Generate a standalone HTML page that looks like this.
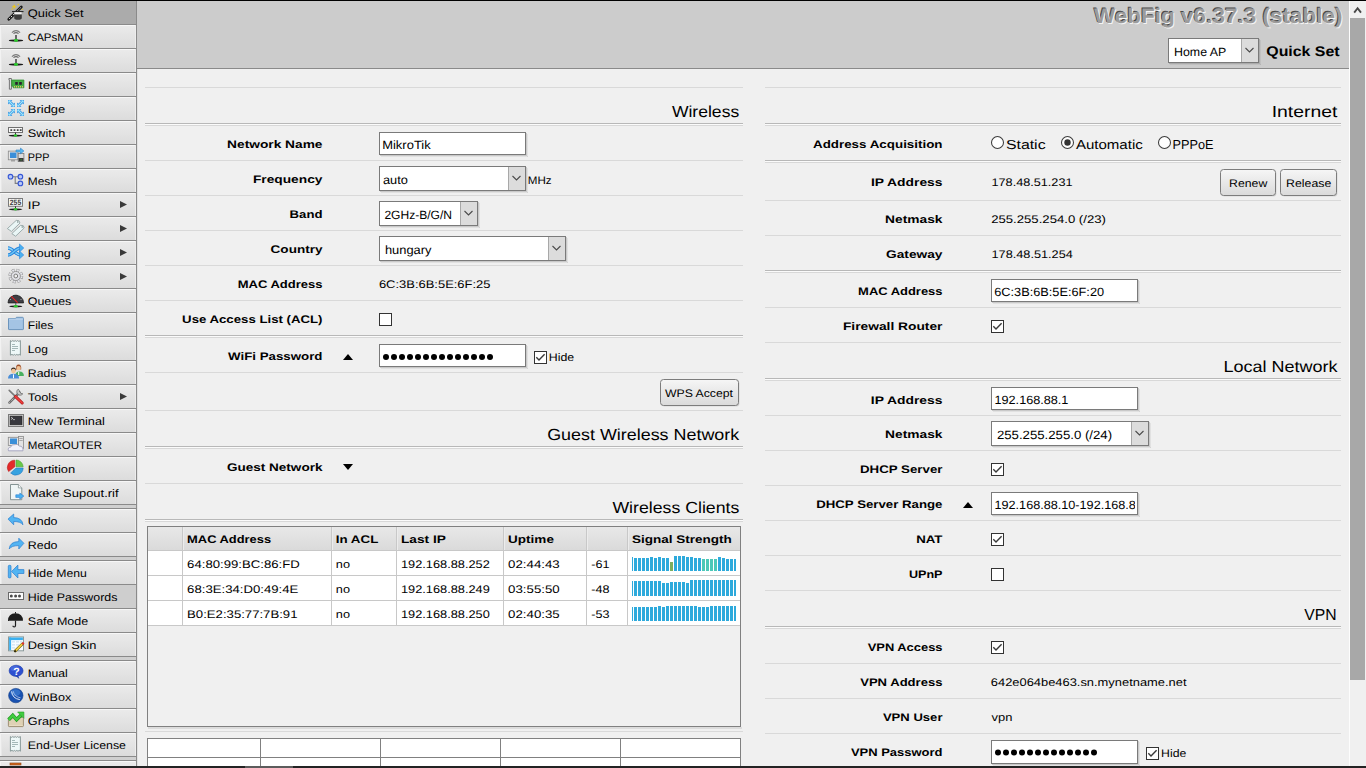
<!DOCTYPE html>
<html><head><meta charset="utf-8"><title>WebFig</title>
<style>html,body{margin:0;padding:0;width:1366px;height:768px;overflow:hidden;background:#f0f0f0;font-family:"Liberation Sans", sans-serif;}</style>
</head><body>
<svg width="1366" height="768" viewBox="0 0 1366 768" style="display:block" font-family="'Liberation Sans', sans-serif" text-rendering="geometricPrecision"><defs>
<linearGradient id="itemg" x1="0" y1="0" x2="0" y2="1"><stop offset="0" stop-color="#ebebeb"/><stop offset="1" stop-color="#dcdcdc"/></linearGradient>
<linearGradient id="btng" x1="0" y1="0" x2="0" y2="1"><stop offset="0" stop-color="#f6f6f6"/><stop offset="1" stop-color="#dadada"/></linearGradient>
<linearGradient id="hdrg" x1="0" y1="0" x2="0" y2="1"><stop offset="0" stop-color="#e8e8e8"/><stop offset="1" stop-color="#dadada"/></linearGradient>
</defs>
<rect x="0" y="0" width="1366" height="768" fill="#f0f0f0" />
<rect x="137" y="1" width="1212" height="67" fill="#cccccc" />
<rect x="137" y="68" width="1212" height="1" fill="#8a8a8a" />
<rect x="137" y="69" width="1" height="697" fill="#e2e2e2" />
<rect x="1349" y="1" width="17" height="765" fill="#f0f0f0" />
<rect x="1349" y="1" width="1" height="765" fill="#fdfdfd" />
<rect x="1350" y="18" width="15" height="662" fill="#a8a8a8" />
<path d="M1354.2 12.6 L1357.6 8.2 L1361 12.6" stroke="#484848" stroke-width="1.9" fill="none"/>
<rect x="0" y="1" width="136" height="765" fill="#d2d2d2" />
<rect x="136" y="1" width="1" height="765" fill="#8a8a8a" />
<rect x="0" y="1" width="136" height="23" fill="#ababab" />
<rect x="0" y="24" width="136" height="1" fill="#8a8a8a" />
<text x="27.8" y="17.0" font-size="11" font-weight="400" fill="#000" textLength="55.8" lengthAdjust="spacingAndGlyphs" >Quick Set</text>
<rect x="0" y="25" width="136" height="23" fill="url(#itemg)"/>
<rect x="0" y="25" width="135" height="1" fill="#f7f7f7" />
<rect x="135" y="25" width="1" height="23" fill="#ededed" />
<rect x="0" y="25" width="1" height="23" fill="#f2f2f2" />
<rect x="1" y="26" width="1" height="22" fill="#e8e8e8" />
<rect x="0" y="48" width="136" height="1" fill="#8a8a8a" />
<text x="27.8" y="41.0" font-size="11" font-weight="400" fill="#000" textLength="55.2" lengthAdjust="spacingAndGlyphs" >CAPsMAN</text>
<rect x="0" y="49" width="136" height="23" fill="url(#itemg)"/>
<rect x="0" y="49" width="135" height="1" fill="#f7f7f7" />
<rect x="135" y="49" width="1" height="23" fill="#ededed" />
<rect x="0" y="49" width="1" height="23" fill="#f2f2f2" />
<rect x="1" y="50" width="1" height="22" fill="#e8e8e8" />
<rect x="0" y="72" width="136" height="1" fill="#8a8a8a" />
<text x="27.8" y="65.0" font-size="11" font-weight="400" fill="#000" textLength="48.5" lengthAdjust="spacingAndGlyphs" >Wireless</text>
<rect x="0" y="73" width="136" height="23" fill="url(#itemg)"/>
<rect x="0" y="73" width="135" height="1" fill="#f7f7f7" />
<rect x="135" y="73" width="1" height="23" fill="#ededed" />
<rect x="0" y="73" width="1" height="23" fill="#f2f2f2" />
<rect x="1" y="74" width="1" height="22" fill="#e8e8e8" />
<rect x="0" y="96" width="136" height="1" fill="#8a8a8a" />
<text x="27.8" y="89.0" font-size="11" font-weight="400" fill="#000" textLength="58.7" lengthAdjust="spacingAndGlyphs" >Interfaces</text>
<rect x="0" y="97" width="136" height="23" fill="url(#itemg)"/>
<rect x="0" y="97" width="135" height="1" fill="#f7f7f7" />
<rect x="135" y="97" width="1" height="23" fill="#ededed" />
<rect x="0" y="97" width="1" height="23" fill="#f2f2f2" />
<rect x="1" y="98" width="1" height="22" fill="#e8e8e8" />
<rect x="0" y="120" width="136" height="1" fill="#8a8a8a" />
<text x="27.8" y="113.0" font-size="11" font-weight="400" fill="#000" textLength="37.5" lengthAdjust="spacingAndGlyphs" >Bridge</text>
<rect x="0" y="121" width="136" height="23" fill="url(#itemg)"/>
<rect x="0" y="121" width="135" height="1" fill="#f7f7f7" />
<rect x="135" y="121" width="1" height="23" fill="#ededed" />
<rect x="0" y="121" width="1" height="23" fill="#f2f2f2" />
<rect x="1" y="122" width="1" height="22" fill="#e8e8e8" />
<rect x="0" y="144" width="136" height="1" fill="#8a8a8a" />
<text x="27.8" y="137.0" font-size="11" font-weight="400" fill="#000" textLength="37.5" lengthAdjust="spacingAndGlyphs" >Switch</text>
<rect x="0" y="145" width="136" height="23" fill="url(#itemg)"/>
<rect x="0" y="145" width="135" height="1" fill="#f7f7f7" />
<rect x="135" y="145" width="1" height="23" fill="#ededed" />
<rect x="0" y="145" width="1" height="23" fill="#f2f2f2" />
<rect x="1" y="146" width="1" height="22" fill="#e8e8e8" />
<rect x="0" y="168" width="136" height="1" fill="#8a8a8a" />
<text x="27.8" y="161.0" font-size="11" font-weight="400" fill="#000" textLength="21.6" lengthAdjust="spacingAndGlyphs" >PPP</text>
<rect x="0" y="169" width="136" height="23" fill="url(#itemg)"/>
<rect x="0" y="169" width="135" height="1" fill="#f7f7f7" />
<rect x="135" y="169" width="1" height="23" fill="#ededed" />
<rect x="0" y="169" width="1" height="23" fill="#f2f2f2" />
<rect x="1" y="170" width="1" height="22" fill="#e8e8e8" />
<rect x="0" y="192" width="136" height="1" fill="#8a8a8a" />
<text x="27.8" y="185.0" font-size="11" font-weight="400" fill="#000" textLength="29.1" lengthAdjust="spacingAndGlyphs" >Mesh</text>
<rect x="0" y="193" width="136" height="23" fill="url(#itemg)"/>
<rect x="0" y="193" width="135" height="1" fill="#f7f7f7" />
<rect x="135" y="193" width="1" height="23" fill="#ededed" />
<rect x="0" y="193" width="1" height="23" fill="#f2f2f2" />
<rect x="1" y="194" width="1" height="22" fill="#e8e8e8" />
<rect x="0" y="216" width="136" height="1" fill="#8a8a8a" />
<text x="27.8" y="209.0" font-size="11" font-weight="400" fill="#000" textLength="12.5" lengthAdjust="spacingAndGlyphs" >IP</text>
<path d="M120 201 L127 204.5 L120 208 Z" fill="#3a3a3a"/>
<rect x="0" y="217" width="136" height="23" fill="url(#itemg)"/>
<rect x="0" y="217" width="135" height="1" fill="#f7f7f7" />
<rect x="135" y="217" width="1" height="23" fill="#ededed" />
<rect x="0" y="217" width="1" height="23" fill="#f2f2f2" />
<rect x="1" y="218" width="1" height="22" fill="#e8e8e8" />
<rect x="0" y="240" width="136" height="1" fill="#8a8a8a" />
<text x="27.8" y="233.0" font-size="11" font-weight="400" fill="#000" textLength="30.2" lengthAdjust="spacingAndGlyphs" >MPLS</text>
<path d="M120 225 L127 228.5 L120 232 Z" fill="#3a3a3a"/>
<rect x="0" y="241" width="136" height="23" fill="url(#itemg)"/>
<rect x="0" y="241" width="135" height="1" fill="#f7f7f7" />
<rect x="135" y="241" width="1" height="23" fill="#ededed" />
<rect x="0" y="241" width="1" height="23" fill="#f2f2f2" />
<rect x="1" y="242" width="1" height="22" fill="#e8e8e8" />
<rect x="0" y="264" width="136" height="1" fill="#8a8a8a" />
<text x="27.8" y="257.0" font-size="11" font-weight="400" fill="#000" textLength="43.0" lengthAdjust="spacingAndGlyphs" >Routing</text>
<path d="M120 249 L127 252.5 L120 256 Z" fill="#3a3a3a"/>
<rect x="0" y="265" width="136" height="23" fill="url(#itemg)"/>
<rect x="0" y="265" width="135" height="1" fill="#f7f7f7" />
<rect x="135" y="265" width="1" height="23" fill="#ededed" />
<rect x="0" y="265" width="1" height="23" fill="#f2f2f2" />
<rect x="1" y="266" width="1" height="22" fill="#e8e8e8" />
<rect x="0" y="288" width="136" height="1" fill="#8a8a8a" />
<text x="27.8" y="281.0" font-size="11" font-weight="400" fill="#000" textLength="43.0" lengthAdjust="spacingAndGlyphs" >System</text>
<path d="M120 273 L127 276.5 L120 280 Z" fill="#3a3a3a"/>
<rect x="0" y="289" width="136" height="23" fill="url(#itemg)"/>
<rect x="0" y="289" width="135" height="1" fill="#f7f7f7" />
<rect x="135" y="289" width="1" height="23" fill="#ededed" />
<rect x="0" y="289" width="1" height="23" fill="#f2f2f2" />
<rect x="1" y="290" width="1" height="22" fill="#e8e8e8" />
<rect x="0" y="312" width="136" height="1" fill="#8a8a8a" />
<text x="27.8" y="305.0" font-size="11" font-weight="400" fill="#000" textLength="43.5" lengthAdjust="spacingAndGlyphs" >Queues</text>
<rect x="0" y="313" width="136" height="23" fill="url(#itemg)"/>
<rect x="0" y="313" width="135" height="1" fill="#f7f7f7" />
<rect x="135" y="313" width="1" height="23" fill="#ededed" />
<rect x="0" y="313" width="1" height="23" fill="#f2f2f2" />
<rect x="1" y="314" width="1" height="22" fill="#e8e8e8" />
<rect x="0" y="336" width="136" height="1" fill="#8a8a8a" />
<text x="27.8" y="329.0" font-size="11" font-weight="400" fill="#000" textLength="25.5" lengthAdjust="spacingAndGlyphs" >Files</text>
<rect x="0" y="337" width="136" height="23" fill="url(#itemg)"/>
<rect x="0" y="337" width="135" height="1" fill="#f7f7f7" />
<rect x="135" y="337" width="1" height="23" fill="#ededed" />
<rect x="0" y="337" width="1" height="23" fill="#f2f2f2" />
<rect x="1" y="338" width="1" height="22" fill="#e8e8e8" />
<rect x="0" y="360" width="136" height="1" fill="#8a8a8a" />
<text x="27.8" y="353.0" font-size="11" font-weight="400" fill="#000" textLength="20.0" lengthAdjust="spacingAndGlyphs" >Log</text>
<rect x="0" y="361" width="136" height="23" fill="url(#itemg)"/>
<rect x="0" y="361" width="135" height="1" fill="#f7f7f7" />
<rect x="135" y="361" width="1" height="23" fill="#ededed" />
<rect x="0" y="361" width="1" height="23" fill="#f2f2f2" />
<rect x="1" y="362" width="1" height="22" fill="#e8e8e8" />
<rect x="0" y="384" width="136" height="1" fill="#8a8a8a" />
<text x="27.8" y="377.0" font-size="11" font-weight="400" fill="#000" textLength="38.5" lengthAdjust="spacingAndGlyphs" >Radius</text>
<rect x="0" y="385" width="136" height="23" fill="url(#itemg)"/>
<rect x="0" y="385" width="135" height="1" fill="#f7f7f7" />
<rect x="135" y="385" width="1" height="23" fill="#ededed" />
<rect x="0" y="385" width="1" height="23" fill="#f2f2f2" />
<rect x="1" y="386" width="1" height="22" fill="#e8e8e8" />
<rect x="0" y="408" width="136" height="1" fill="#8a8a8a" />
<text x="27.8" y="401.0" font-size="11" font-weight="400" fill="#000" textLength="29.7" lengthAdjust="spacingAndGlyphs" >Tools</text>
<path d="M120 393 L127 396.5 L120 400 Z" fill="#3a3a3a"/>
<rect x="0" y="409" width="136" height="23" fill="url(#itemg)"/>
<rect x="0" y="409" width="135" height="1" fill="#f7f7f7" />
<rect x="135" y="409" width="1" height="23" fill="#ededed" />
<rect x="0" y="409" width="1" height="23" fill="#f2f2f2" />
<rect x="1" y="410" width="1" height="22" fill="#e8e8e8" />
<rect x="0" y="432" width="136" height="1" fill="#8a8a8a" />
<text x="27.8" y="425.0" font-size="11" font-weight="400" fill="#000" textLength="77.1" lengthAdjust="spacingAndGlyphs" >New Terminal</text>
<rect x="0" y="433" width="136" height="23" fill="url(#itemg)"/>
<rect x="0" y="433" width="135" height="1" fill="#f7f7f7" />
<rect x="135" y="433" width="1" height="23" fill="#ededed" />
<rect x="0" y="433" width="1" height="23" fill="#f2f2f2" />
<rect x="1" y="434" width="1" height="22" fill="#e8e8e8" />
<rect x="0" y="456" width="136" height="1" fill="#8a8a8a" />
<text x="27.8" y="449.0" font-size="11" font-weight="400" fill="#000" textLength="74.3" lengthAdjust="spacingAndGlyphs" >MetaROUTER</text>
<rect x="0" y="457" width="136" height="23" fill="url(#itemg)"/>
<rect x="0" y="457" width="135" height="1" fill="#f7f7f7" />
<rect x="135" y="457" width="1" height="23" fill="#ededed" />
<rect x="0" y="457" width="1" height="23" fill="#f2f2f2" />
<rect x="1" y="458" width="1" height="22" fill="#e8e8e8" />
<rect x="0" y="480" width="136" height="1" fill="#8a8a8a" />
<text x="27.8" y="473.0" font-size="11" font-weight="400" fill="#000" textLength="47.4" lengthAdjust="spacingAndGlyphs" >Partition</text>
<rect x="0" y="481" width="136" height="23" fill="url(#itemg)"/>
<rect x="0" y="481" width="135" height="1" fill="#f7f7f7" />
<rect x="135" y="481" width="1" height="23" fill="#ededed" />
<rect x="0" y="481" width="1" height="23" fill="#f2f2f2" />
<rect x="1" y="482" width="1" height="22" fill="#e8e8e8" />
<rect x="0" y="504" width="136" height="1" fill="#8a8a8a" />
<text x="27.8" y="497.0" font-size="11" font-weight="400" fill="#000" textLength="90.8" lengthAdjust="spacingAndGlyphs" >Make Supout.rif</text>
<rect x="0" y="509" width="136" height="23" fill="url(#itemg)"/>
<rect x="0" y="509" width="135" height="1" fill="#f7f7f7" />
<rect x="135" y="509" width="1" height="23" fill="#ededed" />
<rect x="0" y="509" width="1" height="23" fill="#f2f2f2" />
<rect x="1" y="510" width="1" height="22" fill="#e8e8e8" />
<rect x="0" y="532" width="136" height="1" fill="#8a8a8a" />
<text x="27.8" y="525.0" font-size="11" font-weight="400" fill="#000" textLength="29.7" lengthAdjust="spacingAndGlyphs" >Undo</text>
<rect x="0" y="533" width="136" height="23" fill="url(#itemg)"/>
<rect x="0" y="533" width="135" height="1" fill="#f7f7f7" />
<rect x="135" y="533" width="1" height="23" fill="#ededed" />
<rect x="0" y="533" width="1" height="23" fill="#f2f2f2" />
<rect x="1" y="534" width="1" height="22" fill="#e8e8e8" />
<rect x="0" y="556" width="136" height="1" fill="#8a8a8a" />
<text x="27.8" y="549.0" font-size="11" font-weight="400" fill="#000" textLength="29.7" lengthAdjust="spacingAndGlyphs" >Redo</text>
<rect x="0" y="561" width="136" height="23" fill="url(#itemg)"/>
<rect x="0" y="561" width="135" height="1" fill="#f7f7f7" />
<rect x="135" y="561" width="1" height="23" fill="#ededed" />
<rect x="0" y="561" width="1" height="23" fill="#f2f2f2" />
<rect x="1" y="562" width="1" height="22" fill="#e8e8e8" />
<rect x="0" y="584" width="136" height="1" fill="#8a8a8a" />
<text x="27.8" y="577.0" font-size="11" font-weight="400" fill="#000" textLength="59.1" lengthAdjust="spacingAndGlyphs" >Hide Menu</text>
<rect x="0" y="585" width="136" height="23" fill="#cecece" />
<rect x="0" y="608" width="136" height="1" fill="#8a8a8a" />
<text x="27.8" y="601.0" font-size="11" font-weight="400" fill="#000" textLength="89.6" lengthAdjust="spacingAndGlyphs" >Hide Passwords</text>
<rect x="0" y="609" width="136" height="23" fill="url(#itemg)"/>
<rect x="0" y="609" width="135" height="1" fill="#f7f7f7" />
<rect x="135" y="609" width="1" height="23" fill="#ededed" />
<rect x="0" y="609" width="1" height="23" fill="#f2f2f2" />
<rect x="1" y="610" width="1" height="22" fill="#e8e8e8" />
<rect x="0" y="632" width="136" height="1" fill="#8a8a8a" />
<text x="27.8" y="625.0" font-size="11" font-weight="400" fill="#000" textLength="60.4" lengthAdjust="spacingAndGlyphs" >Safe Mode</text>
<rect x="0" y="633" width="136" height="23" fill="url(#itemg)"/>
<rect x="0" y="633" width="135" height="1" fill="#f7f7f7" />
<rect x="135" y="633" width="1" height="23" fill="#ededed" />
<rect x="0" y="633" width="1" height="23" fill="#f2f2f2" />
<rect x="1" y="634" width="1" height="22" fill="#e8e8e8" />
<rect x="0" y="656" width="136" height="1" fill="#8a8a8a" />
<text x="27.8" y="649.0" font-size="11" font-weight="400" fill="#000" textLength="68.5" lengthAdjust="spacingAndGlyphs" >Design Skin</text>
<rect x="0" y="661" width="136" height="23" fill="url(#itemg)"/>
<rect x="0" y="661" width="135" height="1" fill="#f7f7f7" />
<rect x="135" y="661" width="1" height="23" fill="#ededed" />
<rect x="0" y="661" width="1" height="23" fill="#f2f2f2" />
<rect x="1" y="662" width="1" height="22" fill="#e8e8e8" />
<rect x="0" y="684" width="136" height="1" fill="#8a8a8a" />
<text x="27.8" y="677.0" font-size="11" font-weight="400" fill="#000" textLength="40.0" lengthAdjust="spacingAndGlyphs" >Manual</text>
<rect x="0" y="685" width="136" height="23" fill="url(#itemg)"/>
<rect x="0" y="685" width="135" height="1" fill="#f7f7f7" />
<rect x="135" y="685" width="1" height="23" fill="#ededed" />
<rect x="0" y="685" width="1" height="23" fill="#f2f2f2" />
<rect x="1" y="686" width="1" height="22" fill="#e8e8e8" />
<rect x="0" y="708" width="136" height="1" fill="#8a8a8a" />
<text x="27.8" y="701.0" font-size="11" font-weight="400" fill="#000" textLength="43.5" lengthAdjust="spacingAndGlyphs" >WinBox</text>
<rect x="0" y="709" width="136" height="23" fill="url(#itemg)"/>
<rect x="0" y="709" width="135" height="1" fill="#f7f7f7" />
<rect x="135" y="709" width="1" height="23" fill="#ededed" />
<rect x="0" y="709" width="1" height="23" fill="#f2f2f2" />
<rect x="1" y="710" width="1" height="22" fill="#e8e8e8" />
<rect x="0" y="732" width="136" height="1" fill="#8a8a8a" />
<text x="27.8" y="725.0" font-size="11" font-weight="400" fill="#000" textLength="41.6" lengthAdjust="spacingAndGlyphs" >Graphs</text>
<rect x="0" y="733" width="136" height="23" fill="url(#itemg)"/>
<rect x="0" y="733" width="135" height="1" fill="#f7f7f7" />
<rect x="135" y="733" width="1" height="23" fill="#ededed" />
<rect x="0" y="733" width="1" height="23" fill="#f2f2f2" />
<rect x="1" y="734" width="1" height="22" fill="#e8e8e8" />
<rect x="0" y="756" width="136" height="1" fill="#8a8a8a" />
<text x="27.8" y="749.0" font-size="11" font-weight="400" fill="#000" textLength="98.2" lengthAdjust="spacingAndGlyphs" >End-User License</text>
<rect x="0" y="761" width="136" height="23" fill="url(#itemg)"/>
<rect x="0" y="761" width="135" height="1" fill="#f7f7f7" />
<rect x="135" y="761" width="1" height="23" fill="#ededed" />
<rect x="0" y="761" width="1" height="23" fill="#f2f2f2" />
<rect x="1" y="762" width="1" height="22" fill="#e8e8e8" />
<rect x="0" y="505" width="136" height="3" fill="#d0d0d0" />
<rect x="0" y="508" width="136" height="1" fill="#8a8a8a" />
<rect x="0" y="557" width="136" height="3" fill="#d0d0d0" />
<rect x="0" y="560" width="136" height="1" fill="#8a8a8a" />
<rect x="0" y="657" width="136" height="3" fill="#d0d0d0" />
<rect x="0" y="660" width="136" height="1" fill="#8a8a8a" />
<rect x="0" y="757" width="136" height="3" fill="#d0d0d0" />
<rect x="0" y="760" width="136" height="1" fill="#8a8a8a" />
<g transform="translate(7,4)">
<path d="M1.8 15.2 L14.3 3" stroke="#1a1a1a" stroke-width="2.8" stroke-linecap="round"/>
<path d="M2.2 14.8 L14 3.3" stroke="#f4f4f4" stroke-width="1" stroke-dasharray="1.3 1.3"/>
<path d="M7.2 7.6 H14.8 V14 Q14.8 15.8 11 15.8 Q7.2 15.8 7.2 14 Z" fill="#3c3c3c"/>
<rect x="7.2" y="7.8" width="7.6" height="2.6" fill="#f2f2f2"/>
<rect x="5" y="7" width="11.5" height="1.1" fill="#2a2a2a"/>
<path d="M7.2 0.2 l0.9 1.6 1.6 0.9 -1.6 0.9 -0.9 1.6 -0.9 -1.6 -1.6 -0.9 1.6 -0.9z" fill="#e6c428"/>
<circle cx="11.3" cy="0.5" r="0.8" fill="#e6c428"/><circle cx="5.2" cy="5.1" r="0.8" fill="#e6c428"/><circle cx="15.3" cy="5.4" r="0.7" fill="#e6c428"/>
</g>
<g transform="translate(7,28)">
<path d="M4.9 4.6 Q9 0.6 13.1 4.6" stroke="#7a7a7a" stroke-width="1.1" fill="none"/>
<path d="M6.5 5.6 Q9 3.6 11.5 5.6" stroke="#6a6a6a" stroke-width="1.1" fill="none"/>
<rect x="8.1" y="7" width="1.8" height="4.6" fill="#5a5a5a"/>
<ellipse cx="9" cy="12.5" rx="7.2" ry="1" fill="#1a1a1a"/>
<ellipse cx="9" cy="12.3" rx="2" ry="1.6" fill="#2cc82c"/>
</g>
<g transform="translate(7,52)">
<path d="M4.9 4.6 Q9 0.6 13.1 4.6" stroke="#7a7a7a" stroke-width="1.1" fill="none"/>
<path d="M6.5 5.6 Q9 3.6 11.5 5.6" stroke="#6a6a6a" stroke-width="1.1" fill="none"/>
<rect x="8.1" y="7" width="1.8" height="4.6" fill="#5a5a5a"/>
<ellipse cx="9" cy="12.5" rx="7.2" ry="1" fill="#1a1a1a"/>
<ellipse cx="9" cy="12.3" rx="2" ry="1.6" fill="#2cc82c"/>
</g>
<g transform="translate(7,76)">
<path d="M1.9 2.5 H4.4 V13.2 H2.4 V3.8 H1.9 Z" fill="#e8e8f0" stroke="#6a6a6a" stroke-width="0.9"/>
<path d="M4.7 4 H16.9 V11.8 H6.2 V10.2 H4.7 Z" fill="#44b044" stroke="#2a8a2a" stroke-width="0.7"/>
<rect x="8.2" y="6" width="2.6" height="2.8" fill="#2c2030"/><rect x="12.2" y="6" width="2.6" height="2.8" fill="#2c2030"/>
<g fill="#e0c060"><rect x="7" y="10" width="1" height="1.5"/><rect x="9" y="10" width="1" height="1.5"/><rect x="11" y="10" width="1" height="1.5"/><rect x="13" y="10" width="1" height="1.5"/><rect x="15" y="10" width="1" height="1.5"/></g>
</g>
<g transform="translate(7,100)"><g transform="translate(1,0)">
<path d="M0 0 H4.4 L0 4.4 Z M7 7 H2.6 L7 2.6 Z" fill="#3a98e4"/>
<path d="M1.4 1.4 L5.6 5.6" stroke="#3a98e4" stroke-width="2.8"/>
<path d="M1.2 1.2 L5.8 5.8" stroke="#a6ecff" stroke-width="1.1"/>
<path d="M0.8 0.8 H2.6 M0.8 0.8 V2.6 M6.2 6.2 H4.4 M6.2 6.2 V4.4" stroke="#a6ecff" stroke-width="0.9"/>
</g><g transform="translate(10,0) translate(7,0) scale(-1,1)">
<path d="M0 0 H4.4 L0 4.4 Z M7 7 H2.6 L7 2.6 Z" fill="#3a98e4"/>
<path d="M1.4 1.4 L5.6 5.6" stroke="#3a98e4" stroke-width="2.8"/>
<path d="M1.2 1.2 L5.8 5.8" stroke="#a6ecff" stroke-width="1.1"/>
<path d="M0.8 0.8 H2.6 M0.8 0.8 V2.6 M6.2 6.2 H4.4 M6.2 6.2 V4.4" stroke="#a6ecff" stroke-width="0.9"/>
</g><g transform="translate(1,9) translate(7,0) scale(-1,1)">
<path d="M0 0 H4.4 L0 4.4 Z M7 7 H2.6 L7 2.6 Z" fill="#3a98e4"/>
<path d="M1.4 1.4 L5.6 5.6" stroke="#3a98e4" stroke-width="2.8"/>
<path d="M1.2 1.2 L5.8 5.8" stroke="#a6ecff" stroke-width="1.1"/>
<path d="M0.8 0.8 H2.6 M0.8 0.8 V2.6 M6.2 6.2 H4.4 M6.2 6.2 V4.4" stroke="#a6ecff" stroke-width="0.9"/>
</g><g transform="translate(10,9)">
<path d="M0 0 H4.4 L0 4.4 Z M7 7 H2.6 L7 2.6 Z" fill="#3a98e4"/>
<path d="M1.4 1.4 L5.6 5.6" stroke="#3a98e4" stroke-width="2.8"/>
<path d="M1.2 1.2 L5.8 5.8" stroke="#a6ecff" stroke-width="1.1"/>
<path d="M0.8 0.8 H2.6 M0.8 0.8 V2.6 M6.2 6.2 H4.4 M6.2 6.2 V4.4" stroke="#a6ecff" stroke-width="0.9"/>
</g></g>
<g transform="translate(7,124)">
<rect x="1.5" y="3.5" width="14" height="5" fill="#f8f8f8" stroke="#707070" stroke-width="1"/>
<rect x="3.4" y="5.3" width="1.8" height="1.6" fill="#303030"/><rect x="6.6" y="5.3" width="1.8" height="1.6" fill="#303030"/><rect x="9.8" y="5.3" width="1.8" height="1.6" fill="#303030"/><rect x="12.8" y="5.3" width="1.8" height="1.6" fill="#303030"/>
<rect x="8" y="8.6" width="1" height="2.6" fill="#333"/>
<ellipse cx="8.5" cy="11.7" rx="6.8" ry="0.9" fill="#1a1a1a"/>
<ellipse cx="8.5" cy="11.6" rx="1.6" ry="1.3" fill="#2cc82c"/>
</g>
<g transform="translate(7,148)">
<rect x="1.3" y="3.1" width="9.6" height="8.7" fill="#e4e4e4" stroke="#8a8a8a" stroke-width="0.8"/>
<rect x="3" y="4.5" width="6.5" height="5.5" fill="#3a8ed8"/>
<rect x="4" y="11.8" width="4" height="1.7" fill="#a0a0a0"/>
<rect x="11.2" y="5.5" width="5.7" height="8.1" fill="#dcdcdc" stroke="#7a7a7a" stroke-width="0.8"/>
<rect x="11.6" y="10" width="4.9" height="3.4" fill="#3a3a3a"/><rect x="13.6" y="11.3" width="1" height="1" fill="#3c3"/>
<path d="M9 2 H13.5 V0.1 L16.9 3 L13.5 5.8 V4 H9 Z" fill="#5ab8f0" stroke="#2a80c8" stroke-width="0.6"/>
</g>
<g transform="translate(7,172)">
<path d="M3.5 4.7 H13.4 M8.2 4.7 V11.4 H13.4" stroke="#808080" stroke-width="1.1" fill="none"/>
<g fill="#b8c8f4" stroke="#3456d6" stroke-width="1.1"><circle cx="3.5" cy="4.7" r="2.3"/><circle cx="13.4" cy="4.7" r="2.3"/><circle cx="13.4" cy="11.4" r="2.3"/></g>
</g>
<g transform="translate(7,196)">
<rect x="1.5" y="2.5" width="14" height="7.8" fill="#f8f8f8" stroke="#7a7a7a" stroke-width="1"/>
<text x="2.8" y="8.6" font-size="7.6" font-weight="700" fill="#3a3a3a" textLength="11.4" lengthAdjust="spacingAndGlyphs">255</text>
<rect x="8" y="10.3" width="1" height="2.6" fill="#333"/>
<ellipse cx="8.5" cy="13.3" rx="6.8" ry="0.9" fill="#1a1a1a"/>
<ellipse cx="8.5" cy="13.2" rx="1.6" ry="1.3" fill="#2cc82c"/>
</g>
<g transform="translate(7,220)">
<g stroke="#8a9c9c" stroke-width="0.8" fill="#eaf6f6" stroke-linejoin="round">
<path d="M0.4 8.6 L9.2 0.4 L11.8 0.6 L13 3 L4.4 11.4 Z"/>
<path d="M4.8 13.6 L13.6 5.4 L16.2 5.6 L17.2 8 L8.6 16.2 Z"/>
</g>
<circle cx="10.8" cy="2" r="0.7" fill="#6a7a7a"/><circle cx="15.2" cy="7" r="0.7" fill="#6a7a7a"/>
</g>
<g transform="translate(7,244)">
<path d="M1 4 C6 4 8 11 14 11" stroke="#2a86dc" stroke-width="3.4" fill="none"/>
<path d="M1 4 C6 4 8 11 14 11" stroke="#8ad4fa" stroke-width="1.4" fill="none"/>
<path d="M1 11 C6 11 8 4 14 4" stroke="#2a86dc" stroke-width="3.4" fill="none"/>
<path d="M1 11 C6 11 8 4 14 4" stroke="#6cc4f6" stroke-width="1.4" fill="none"/>
<path d="M12.5 0 L16.8 4 L12.5 8 Z M12.5 7 L16.8 11 L12.5 14.8 Z" fill="#4ab0f0" stroke="#2a86dc" stroke-width="0.6"/>
</g>
<g transform="translate(7,268)">
<circle cx="8.8" cy="8" r="5.6" fill="none" stroke="#8a8a8a" stroke-width="3.6" stroke-dasharray="2.5 1.9"/>
<circle cx="8.8" cy="8" r="5.6" fill="none" stroke="#e4e4ea" stroke-width="2.6" stroke-dasharray="1.9 2.5" stroke-dashoffset="-0.3"/>
<circle cx="8.8" cy="8" r="4.6" fill="#e0e0e6" stroke="#8a8a8a" stroke-width="0.8"/>
<circle cx="8.8" cy="8" r="1.9" fill="#f0f0f0" stroke="#7a7a7a" stroke-width="1"/>
</g>
<g transform="translate(7,292)">
<path d="M1 10.9 A7.8 7.8 0 0 1 16.6 10.9 Z" fill="#3e3e44" stroke="#1e1e1e" stroke-width="0.8"/>
<g fill="#cfcfcf"><circle cx="3.6" cy="7.6" r="0.5"/><circle cx="5.5" cy="3.2" r="0.5"/><circle cx="8.8" cy="2" r="0.5"/><circle cx="12" cy="3.2" r="0.5"/><circle cx="14" cy="7.6" r="0.5"/></g>
<path d="M4.3 4.3 L10.6 10.6" stroke="#e82020" stroke-width="1.1"/>
<rect x="8.3" y="11" width="1" height="2" fill="#555"/>
<ellipse cx="8.8" cy="14.4" rx="6.5" ry="0.9" fill="#1a1a1a"/>
<ellipse cx="8.8" cy="14.3" rx="2" ry="1.3" fill="#2cc82c"/>
</g>
<g transform="translate(7,316)">
<path d="M1.5 2.6 H8.6 L9.4 1.3 H15.4 Q16.4 1.3 16.4 2.3 V13.1 Q16.4 13.6 15.9 13.6 H2 Q1.5 13.6 1.5 13.1 Z" fill="#a4c4e4" stroke="#6c94bc" stroke-width="1"/>
<path d="M2 3.2 H16" stroke="#c8dcf0" stroke-width="0.8"/>
</g>
<g transform="translate(7,340)">
<path d="M3.4 0.6 L4.6 1.4 L5.8 0.6 L7 1.4 L8.2 0.6 L9.4 1.4 L10.6 0.6 L11.8 1.4 L13.4 0.6 V15.2 L12.2 14.4 L11 15.2 L9.8 14.4 L8.6 15.2 L7.4 14.4 L6.2 15.2 L5 14.4 L3.4 15.2 Z" fill="#eef8f8" stroke="#7e9090" stroke-width="0.9"/>
<g fill="#a4b8b8"><rect x="5" y="4" width="3" height="1"/><rect x="5" y="6" width="6" height="1"/><rect x="5" y="8" width="6" height="1"/><rect x="5" y="10" width="3" height="1"/></g>
</g>
<g transform="translate(7,736)">
<path d="M3.4 0.6 L4.6 1.4 L5.8 0.6 L7 1.4 L8.2 0.6 L9.4 1.4 L10.6 0.6 L11.8 1.4 L13.4 0.6 V15.2 L12.2 14.4 L11 15.2 L9.8 14.4 L8.6 15.2 L7.4 14.4 L6.2 15.2 L5 14.4 L3.4 15.2 Z" fill="#eef8f8" stroke="#7e9090" stroke-width="0.9"/>
<g fill="#a4b8b8"><rect x="5" y="4" width="3" height="1"/><rect x="5" y="6" width="6" height="1"/><rect x="5" y="8" width="6" height="1"/><rect x="5" y="10" width="3" height="1"/></g>
</g>
<g transform="translate(7,364)">
<path d="M8.2 11.9 Q8.2 7.4 12.5 7.4 Q16.9 7.4 16.9 11.9 Z" fill="#48b060"/>
<path d="M9 5.5 Q8.6 0.4 11.6 0.4 Q14.6 0.4 14.2 5.5 Z" fill="#a0502a"/>
<circle cx="11.6" cy="4.1" r="2.2" fill="#f0c498"/>
<rect x="11.2" y="8" width="1" height="3" fill="#fff"/>
<path d="M1 14.6 Q1 9.8 6.5 9.8 Q12.1 9.8 12.1 14.6 Z" fill="#4a8ed8"/>
<path d="M4 6.4 Q4 3.6 6.5 3.6 Q9 3.6 9 6.4 Z" fill="#3a2a20"/>
<circle cx="6.5" cy="7" r="2.3" fill="#f0c498"/>
<rect x="6" y="10.4" width="1" height="3.8" fill="#fff"/>
</g>
<g transform="translate(7,388)">
<path d="M2.4 14.6 L12.6 4.4" stroke="#6a6a6a" stroke-width="2.4" stroke-linecap="round"/>
<path d="M2.4 14.6 L12.6 4.4" stroke="#d8d8d8" stroke-width="1" stroke-dasharray="1 1"/>
<path d="M11.2 1.2 A3.3 3.3 0 1 0 15.8 5.8 L14 5.4 L12.6 4 L12.2 2.4 Z" fill="#c8c8c8" stroke="#6a6a6a" stroke-width="0.8"/>
<path d="M2.2 2.4 L8.6 8.6" stroke="#7a7a7a" stroke-width="1.6" stroke-linecap="round"/>
<path d="M8.6 8.6 L15.2 15" stroke="#b01818" stroke-width="3" stroke-linecap="round"/>
<path d="M8.6 8.6 L15.2 15" stroke="#f04040" stroke-width="1.6" stroke-linecap="round"/>
</g>
<g transform="translate(7,412)">
<rect x="1.5" y="2.5" width="15" height="12" fill="#d4d4d4" stroke="#7a7a7a" stroke-width="1"/>
<rect x="3.1" y="4.1" width="11.9" height="8.7" fill="#38383e" stroke="#1e1e1e" stroke-width="0.6"/>
<path d="M4.2 5.4 L5.8 6.4 L4.2 7.4 M6.2 7.6 H7.8" stroke="#e8e8e8" stroke-width="0.8" fill="none"/>
</g>
<g transform="translate(7,436)">
<rect x="11.5" y="0.5" width="5" height="12" fill="#e4e4e4" stroke="#8a8a8a" stroke-width="0.8"/>
<rect x="12.3" y="2" width="3.4" height="0.8" fill="#999"/><rect x="12.3" y="4" width="3.4" height="0.8" fill="#999"/>
<rect x="1.3" y="1.3" width="10.2" height="8.1" fill="#e4e4e4" stroke="#8a8a8a" stroke-width="0.8"/>
<rect x="3" y="2.5" width="7" height="5.5" fill="#3a8ed8"/>
<path d="M1.5 14.8 Q0.4 11.5 3.6 11.2 Q4.4 8 8.2 8.6 Q10.6 7.6 12.2 10 Q16.4 10 16 14.8 Z" fill="#f2f2fa" stroke="#9a9ab8" stroke-width="0.8"/>
</g>
<g transform="translate(7,460)">
<path d="M7.8 0.2 A7.3 7.3 0 0 0 1.6 11.6 L7.8 6.8 Z" fill="#e42a2a" stroke="#b01818" stroke-width="0.5"/>
<path d="M9 0 A7.2 7.2 0 0 1 16.2 6.8 L9 6.8 Z" fill="#6ac848" stroke="#3a9a2a" stroke-width="0.5"/>
<path d="M16.2 8 A7.4 7.4 0 0 1 3.6 13 L9 8 Z" fill="#36a2e0" stroke="#1a70b8" stroke-width="0.5"/>
</g>
<g transform="translate(7,484)">
<path d="M3.5 0.5 H11.4 L14.8 3.9 V15.7 H3.5 Z" fill="#f0f6f6" stroke="#7a8a8a" stroke-width="0.9"/>
<path d="M11.4 0.5 V3.9 H14.8" fill="#ffffff" stroke="#7a8a8a" stroke-width="0.7"/>
<path d="M8.8 10.8 H12.8 V9.1 L16.9 12.1 L12.8 15.1 V13.4 H8.8 Z" fill="#4ab2f2" stroke="#2a7ed0" stroke-width="0.6"/>
</g>
<g transform="translate(7,512)">
<path d="M1 7.1 L6.7 2 V5.6 Q15 5.6 16 12.8 Q13.5 9.5 6.7 9.5 V12.8 Z" fill="#52b4f2" stroke="#2a7ed0" stroke-width="0.7" stroke-linejoin="round"/>
</g>
<g transform="translate(7,536)">
<path d="M16.9 7.3 L11.8 2.2 V5.6 Q3 5.6 2.2 13 Q4.6 9.6 11.8 9.6 V13 Z" fill="#52b4f2" stroke="#2a7ed0" stroke-width="0.7" stroke-linejoin="round"/>
</g>
<g transform="translate(7,564)">
<rect x="1.3" y="1.3" width="2.7" height="12.6" rx="1" fill="#52b4f2" stroke="#2a7ed0" stroke-width="0.7"/>
<path d="M4.6 7.5 L10.9 1.1 V5.6 H16.9 V9.5 H10.9 V14 Z" fill="#52b4f2" stroke="#2a7ed0" stroke-width="0.7" stroke-linejoin="round"/>
</g>
<g transform="translate(7,588)">
<rect x="1.5" y="4.5" width="15" height="7" fill="#fbfbfb" stroke="#6a6a6a" stroke-width="1"/>
<g fill="#4a4a4a"><circle cx="4.3" cy="8" r="1.5"/><circle cx="8.6" cy="8" r="1.5"/><circle cx="12.5" cy="8" r="1.5"/></g>
</g>
<g transform="translate(7,612)">
<path d="M1 8.9 Q1.2 1.3 8.5 1.3 Q15.8 1.3 16 8.9 Q15 8 14 8.9 Q13 8 12 8.9 Q11 8 10 8.9 Q9 8 8 8.9 Q7 8 6 8.9 Q5 8 4 8.9 Q3 8 2 8.9 Z" fill="#1e1e1e"/>
<rect x="8" y="0" width="1" height="1.6" fill="#222"/>
<path d="M8.5 8.5 V13.6 Q8.5 15 7.2 15 Q6 15 6 13.8" stroke="#1e1e1e" stroke-width="1.2" fill="none"/>
</g>
<g transform="translate(7,636)">
<rect x="1.5" y="0.9" width="15" height="13.9" fill="#f8fcff" stroke="#8a9a9a" stroke-width="1"/>
<rect x="2.1" y="1.5" width="13.8" height="2.6" fill="#3ab0f0"/>
<rect x="2.1" y="1.5" width="2" height="12.7" fill="#3ab0f0"/>
<g fill="#d8e8f4"><rect x="5" y="5" width="3" height="1.6"/><rect x="9" y="5" width="3" height="1.6"/><rect x="13" y="5" width="2.5" height="1.6"/><rect x="5" y="8" width="3" height="1.6"/><rect x="9" y="8" width="3" height="1.6"/><rect x="5" y="11" width="3" height="1.6"/></g>
<path d="M8.2 15.1 L15.4 7.9" stroke="#6a5a10" stroke-width="2.8" stroke-linecap="round"/>
<path d="M8.2 15.1 L15.4 7.9" stroke="#f2d040" stroke-width="1.8"/>
<circle cx="16" cy="7.4" r="1.2" fill="#e03030"/>
<path d="M7.6 15.7 L8.8 14.5" stroke="#111" stroke-width="1.4"/>
</g>
<g transform="translate(7,664)">
<path d="M10.8 11 L12.4 14.9 L8.6 12 Z" fill="#1e3ea8"/>
<ellipse cx="9.1" cy="6.8" rx="7" ry="5.6" fill="#2d50d0" stroke="#1e3ea8" stroke-width="0.6"/>
<ellipse cx="8" cy="4.5" rx="4.5" ry="2.6" fill="#5a7ae8" opacity="0.6"/>
<text x="6.2" y="10.6" font-size="10.5" font-weight="700" fill="#ffffff">?</text>
</g>
<g transform="translate(7,688)">
<circle cx="8.8" cy="7.6" r="7.2" fill="#1a52b0" stroke="#0e3a88" stroke-width="0.6"/>
<ellipse cx="8.4" cy="4.6" rx="5" ry="3.4" fill="#4a8ae0" opacity="0.55"/>
<path d="M4.6 3.4 Q5.4 10.6 12.8 11.6" stroke="#f0f4ff" stroke-width="0.9" fill="none"/>
<path d="M6.2 3.2 Q7.4 8.8 13.6 9.8" stroke="#c8d8f4" stroke-width="0.7" fill="none"/>
</g>
<g transform="translate(7,712)">
<rect x="1.4" y="5.6" width="15" height="9" rx="0.8" fill="#e8dcc2" stroke="#8a7a5a" stroke-width="0.8"/>
<path d="M2 8 H16 M2 10 H16 M2 12 H16" stroke="#c8b898" stroke-width="0.6"/>
<path d="M1.6 7.8 L5.8 3.4 L9.6 7.6 L14 3.2" stroke="#1e9a1e" stroke-width="3.6" fill="none" stroke-linejoin="miter"/>
<path d="M1.6 7.8 L5.8 3.4 L9.6 7.6 L14 3.2" stroke="#40cc40" stroke-width="2.2" fill="none"/>
<path d="M10.6 0 H16.9 V6.3 Z" fill="#40cc40" stroke="#1e9a1e" stroke-width="0.6"/>
</g>
<rect x="10" y="763" width="11" height="2" fill="#d86a20" stroke="#8a4010" stroke-width="0.6"/>
<rect x="0" y="0" width="1366" height="1" fill="#000" />
<text x="1093" y="22" font-size="21" font-weight="700" fill="#4a4a4a" textLength="248.5" lengthAdjust="spacingAndGlyphs">WebFig v6.37.3 (stable)</text>
<text x="1095" y="24" font-size="21" font-weight="700" fill="#f4f4f4" textLength="248.5" lengthAdjust="spacingAndGlyphs">WebFig v6.37.3 (stable)</text>
<text x="1094" y="23" font-size="21" font-weight="700" fill="#9c9c9c" textLength="248.5" lengthAdjust="spacingAndGlyphs">WebFig v6.37.3 (stable)</text>
<rect x="1169" y="63" width="91" height="1" fill="rgba(0,0,0,0.16)" />
<rect x="1259" y="39" width="1" height="24" fill="rgba(0,0,0,0.16)" />
<rect x="1170" y="64" width="91" height="1" fill="rgba(0,0,0,0.06)" />
<rect x="1260" y="40" width="1" height="25" fill="rgba(0,0,0,0.06)" />
<rect x="1168" y="38" width="91" height="25" fill="#7a7a7a" />
<rect x="1169" y="39" width="89" height="23" fill="#ffffff" />
<rect x="1241" y="39" width="17" height="23" fill="#dcdcdc" />
<rect x="1241" y="39" width="1" height="23" fill="#a8a8a8" />
<path d="M1245.5 48 L1249.5 52 L1253.5 48" stroke="#4a4a4a" stroke-width="1.1" fill="none"/>
<text x="1174.0" y="56.0" font-size="12" font-weight="400" fill="#000" textLength="52.3" lengthAdjust="spacingAndGlyphs" >Home AP</text>
<text x="1266.3" y="56.0" font-size="14" font-weight="700" fill="#000" textLength="73.3" lengthAdjust="spacingAndGlyphs" >Quick Set</text>
<rect x="145" y="87" width="598" height="1" fill="#d9d9d9" />
<text x="671.9" y="117.0" font-size="16" font-weight="400" fill="#000" textLength="67.3" lengthAdjust="spacingAndGlyphs" >Wireless</text>
<rect x="145" y="123" width="598" height="1" fill="#b8b8b8" />
<rect x="145" y="124" width="598" height="1" fill="#fbfbfb" />
<rect x="145" y="125" width="598" height="1" fill="#d8d8d8" />
<text x="227.1" y="148.0" font-size="11" font-weight="700" fill="#000" textLength="95.4" lengthAdjust="spacingAndGlyphs" >Network Name</text>
<rect x="380" y="155" width="147" height="1" fill="rgba(0,0,0,0.16)" />
<rect x="526" y="133" width="1" height="22" fill="rgba(0,0,0,0.16)" />
<rect x="381" y="156" width="147" height="1" fill="rgba(0,0,0,0.06)" />
<rect x="527" y="134" width="1" height="23" fill="rgba(0,0,0,0.06)" />
<rect x="379" y="132" width="147" height="23" fill="#7a7a7a" />
<rect x="380" y="133" width="145" height="21" fill="#ffffff" />
<text x="382.2" y="149.0" font-size="12" font-weight="400" fill="#000" textLength="48.5" lengthAdjust="spacingAndGlyphs" >MikroTik</text>
<rect x="145" y="160" width="598" height="1" fill="#d9d9d9" />
<text x="252.9" y="183.0" font-size="11" font-weight="700" fill="#000" textLength="69.6" lengthAdjust="spacingAndGlyphs" >Frequency</text>
<rect x="380" y="191" width="147" height="1" fill="rgba(0,0,0,0.16)" />
<rect x="526" y="167" width="1" height="24" fill="rgba(0,0,0,0.16)" />
<rect x="381" y="192" width="147" height="1" fill="rgba(0,0,0,0.06)" />
<rect x="527" y="168" width="1" height="25" fill="rgba(0,0,0,0.06)" />
<rect x="379" y="166" width="147" height="25" fill="#7a7a7a" />
<rect x="380" y="167" width="145" height="23" fill="#ffffff" />
<rect x="508" y="167" width="17" height="23" fill="#dcdcdc" />
<rect x="508" y="167" width="1" height="23" fill="#a8a8a8" />
<path d="M512.5 176 L516.5 180 L520.5 176" stroke="#4a4a4a" stroke-width="1.1" fill="none"/>
<text x="383.0" y="184.0" font-size="12" font-weight="400" fill="#000" textLength="24.9" lengthAdjust="spacingAndGlyphs" >auto</text>
<text x="527.8" y="184.0" font-size="11" font-weight="400" fill="#000" textLength="23.8" lengthAdjust="spacingAndGlyphs" >MHz</text>
<rect x="145" y="195" width="598" height="1" fill="#d9d9d9" />
<text x="289.6" y="218.0" font-size="11" font-weight="700" fill="#000" textLength="32.9" lengthAdjust="spacingAndGlyphs" >Band</text>
<rect x="380" y="226" width="99" height="1" fill="rgba(0,0,0,0.16)" />
<rect x="478" y="202" width="1" height="24" fill="rgba(0,0,0,0.16)" />
<rect x="381" y="227" width="99" height="1" fill="rgba(0,0,0,0.06)" />
<rect x="479" y="203" width="1" height="25" fill="rgba(0,0,0,0.06)" />
<rect x="379" y="201" width="99" height="25" fill="#7a7a7a" />
<rect x="380" y="202" width="97" height="23" fill="#ffffff" />
<rect x="460" y="202" width="17" height="23" fill="#dcdcdc" />
<rect x="460" y="202" width="1" height="23" fill="#a8a8a8" />
<path d="M464.5 211 L468.5 215 L472.5 211" stroke="#4a4a4a" stroke-width="1.1" fill="none"/>
<text x="384.4" y="219.0" font-size="12" font-weight="400" fill="#000" textLength="67.6" lengthAdjust="spacingAndGlyphs" >2GHz-B/G/N</text>
<rect x="145" y="230" width="598" height="1" fill="#d9d9d9" />
<text x="270.6" y="253.0" font-size="11" font-weight="700" fill="#000" textLength="51.9" lengthAdjust="spacingAndGlyphs" >Country</text>
<rect x="380" y="261" width="187" height="1" fill="rgba(0,0,0,0.16)" />
<rect x="566" y="237" width="1" height="24" fill="rgba(0,0,0,0.16)" />
<rect x="381" y="262" width="187" height="1" fill="rgba(0,0,0,0.06)" />
<rect x="567" y="238" width="1" height="25" fill="rgba(0,0,0,0.06)" />
<rect x="379" y="236" width="187" height="25" fill="#7a7a7a" />
<rect x="380" y="237" width="185" height="23" fill="#ffffff" />
<rect x="548" y="237" width="17" height="23" fill="#dcdcdc" />
<rect x="548" y="237" width="1" height="23" fill="#a8a8a8" />
<path d="M552.5 246 L556.5 250 L560.5 246" stroke="#4a4a4a" stroke-width="1.1" fill="none"/>
<text x="384.9" y="254.0" font-size="12" font-weight="400" fill="#000" textLength="46.6" lengthAdjust="spacingAndGlyphs" >hungary</text>
<rect x="145" y="265" width="598" height="1" fill="#d9d9d9" />
<text x="237.7" y="288.0" font-size="11" font-weight="700" fill="#000" textLength="84.8" lengthAdjust="spacingAndGlyphs" >MAC Address</text>
<text x="378.9" y="288.0" font-size="11" font-weight="400" fill="#000" textLength="111.6" lengthAdjust="spacingAndGlyphs" >6C:3B:6B:5E:6F:25</text>
<rect x="145" y="300" width="598" height="1" fill="#d9d9d9" />
<text x="182.1" y="323.0" font-size="11" font-weight="700" fill="#000" textLength="140.4" lengthAdjust="spacingAndGlyphs" >Use Access List (ACL)</text>
<rect x="379" y="313" width="13" height="13" fill="#333" />
<rect x="380" y="314" width="11" height="11" fill="#fff" />
<rect x="145" y="335" width="598" height="1" fill="#b8b8b8" />
<rect x="145" y="336" width="598" height="1" fill="#fbfbfb" />
<rect x="145" y="337" width="598" height="1" fill="#d8d8d8" />
<text x="228.1" y="360.0" font-size="11" font-weight="700" fill="#000" textLength="94.4" lengthAdjust="spacingAndGlyphs" >WiFi Password</text>
<path d="M343 360 L348.0 354 L353 360z" fill="#000"/>
<rect x="380" y="367" width="147" height="1" fill="rgba(0,0,0,0.16)" />
<rect x="526" y="345" width="1" height="22" fill="rgba(0,0,0,0.16)" />
<rect x="381" y="368" width="147" height="1" fill="rgba(0,0,0,0.06)" />
<rect x="527" y="346" width="1" height="23" fill="rgba(0,0,0,0.06)" />
<rect x="379" y="344" width="147" height="23" fill="#7a7a7a" />
<rect x="380" y="345" width="145" height="21" fill="#ffffff" />
<circle cx="386" cy="357" r="3" fill="#000"/>
<circle cx="394" cy="357" r="3" fill="#000"/>
<circle cx="402" cy="357" r="3" fill="#000"/>
<circle cx="410" cy="357" r="3" fill="#000"/>
<circle cx="418" cy="357" r="3" fill="#000"/>
<circle cx="426" cy="357" r="3" fill="#000"/>
<circle cx="434" cy="357" r="3" fill="#000"/>
<circle cx="442" cy="357" r="3" fill="#000"/>
<circle cx="450" cy="357" r="3" fill="#000"/>
<circle cx="458" cy="357" r="3" fill="#000"/>
<circle cx="466" cy="357" r="3" fill="#000"/>
<circle cx="474" cy="357" r="3" fill="#000"/>
<circle cx="482" cy="357" r="3" fill="#000"/>
<circle cx="490" cy="357" r="3" fill="#000"/>
<rect x="534" y="351" width="13" height="13" fill="#333" />
<rect x="535" y="352" width="11" height="11" fill="#fff" />
<path d="M536.3 357.3 L539 360 L544.6 354.3" stroke="#3a3a3a" stroke-width="1.4" fill="none"/>
<text x="548.8" y="361.0" font-size="11" font-weight="400" fill="#000" textLength="25.4" lengthAdjust="spacingAndGlyphs" >Hide</text>
<rect x="145" y="372" width="598" height="1" fill="#d9d9d9" />
<rect x="661.5" y="380.5" width="78" height="26" rx="3" fill="#d8d8d8"/>
<rect x="660.5" y="379.5" width="78" height="26" rx="3" fill="url(#btng)" stroke="#7c7c7c"/>
<text x="664.9" y="397.0" font-size="11" font-weight="400" fill="#000" textLength="68.1" lengthAdjust="spacingAndGlyphs" >WPS Accept</text>
<rect x="145" y="410" width="598" height="1" fill="#d9d9d9" />
<text x="547.2" y="440.0" font-size="16" font-weight="400" fill="#000" textLength="192.0" lengthAdjust="spacingAndGlyphs" >Guest Wireless Network</text>
<rect x="145" y="446" width="598" height="1" fill="#b8b8b8" />
<rect x="145" y="447" width="598" height="1" fill="#fbfbfb" />
<rect x="145" y="448" width="598" height="1" fill="#d8d8d8" />
<text x="226.9" y="471.0" font-size="11" font-weight="700" fill="#000" textLength="95.6" lengthAdjust="spacingAndGlyphs" >Guest Network</text>
<path d="M343 464 L348.0 470 L353 464z" fill="#000"/>
<rect x="145" y="483" width="598" height="1" fill="#d9d9d9" />
<text x="612.4" y="513.0" font-size="16" font-weight="400" fill="#000" textLength="126.9" lengthAdjust="spacingAndGlyphs" >Wireless Clients</text>
<rect x="145" y="519" width="598" height="1" fill="#b8b8b8" />
<rect x="145" y="520" width="598" height="1" fill="#fbfbfb" />
<rect x="145" y="521" width="598" height="1" fill="#d8d8d8" />
<rect x="148" y="727" width="594" height="2" fill="#dcdcdc" />
<rect x="147" y="526" width="594" height="201" fill="#808080" />
<rect x="148" y="527" width="592" height="199" fill="#f0f0f0" />
<rect x="148" y="527" width="592" height="23" fill="url(#hdrg)"/>
<rect x="148" y="551" width="592" height="75" fill="#ffffff" />
<rect x="148" y="550" width="592" height="1" fill="#c8c8c8" />
<rect x="148" y="575" width="592" height="1" fill="#c8c8c8" />
<rect x="148" y="600" width="592" height="1" fill="#c8c8c8" />
<rect x="148" y="625" width="592" height="1" fill="#c8c8c8" />
<rect x="182" y="527" width="1" height="99" fill="#c8c8c8" />
<rect x="183" y="527" width="1" height="23" fill="#ececec" />
<rect x="331" y="527" width="1" height="99" fill="#c8c8c8" />
<rect x="332" y="527" width="1" height="23" fill="#ececec" />
<rect x="396" y="527" width="1" height="99" fill="#c8c8c8" />
<rect x="397" y="527" width="1" height="23" fill="#ececec" />
<rect x="503" y="527" width="1" height="99" fill="#c8c8c8" />
<rect x="504" y="527" width="1" height="23" fill="#ececec" />
<rect x="586" y="527" width="1" height="99" fill="#c8c8c8" />
<rect x="587" y="527" width="1" height="23" fill="#ececec" />
<rect x="627" y="527" width="1" height="99" fill="#c8c8c8" />
<rect x="628" y="527" width="1" height="23" fill="#ececec" />
<text x="187.1" y="543.0" font-size="11" font-weight="700" fill="#000" textLength="84.0" lengthAdjust="spacingAndGlyphs" >MAC Address</text>
<text x="335.8" y="543.0" font-size="11" font-weight="700" fill="#000" textLength="42.5" lengthAdjust="spacingAndGlyphs" >In ACL</text>
<text x="401.0" y="543.0" font-size="11" font-weight="700" fill="#000" textLength="44.9" lengthAdjust="spacingAndGlyphs" >Last IP</text>
<text x="508.1" y="543.0" font-size="11" font-weight="700" fill="#000" textLength="45.8" lengthAdjust="spacingAndGlyphs" >Uptime</text>
<text x="631.9" y="543.0" font-size="11" font-weight="700" fill="#000" textLength="99.9" lengthAdjust="spacingAndGlyphs" >Signal Strength</text>
<text x="187.1" y="568.0" font-size="11" font-weight="400" fill="#000" textLength="112.7" lengthAdjust="spacingAndGlyphs" >64:80:99:BC:86:FD</text>
<text x="335.8" y="568.0" font-size="11" font-weight="400" fill="#000" textLength="14.2" lengthAdjust="spacingAndGlyphs" >no</text>
<text x="401.0" y="568.0" font-size="11" font-weight="400" fill="#000" textLength="88.8" lengthAdjust="spacingAndGlyphs" >192.168.88.252</text>
<text x="508.1" y="568.0" font-size="11" font-weight="400" fill="#000" textLength="51.6" lengthAdjust="spacingAndGlyphs" >02:44:43</text>
<text x="591.3" y="568.0" font-size="11" font-weight="400" fill="#000" textLength="18.2" lengthAdjust="spacingAndGlyphs" >-61</text>
<text x="187.1" y="593.0" font-size="11" font-weight="400" fill="#000" textLength="111.2" lengthAdjust="spacingAndGlyphs" >68:3E:34:D0:49:4E</text>
<text x="335.8" y="593.0" font-size="11" font-weight="400" fill="#000" textLength="14.2" lengthAdjust="spacingAndGlyphs" >no</text>
<text x="401.0" y="593.0" font-size="11" font-weight="400" fill="#000" textLength="88.8" lengthAdjust="spacingAndGlyphs" >192.168.88.249</text>
<text x="508.1" y="593.0" font-size="11" font-weight="400" fill="#000" textLength="51.6" lengthAdjust="spacingAndGlyphs" >03:55:50</text>
<text x="591.3" y="593.0" font-size="11" font-weight="400" fill="#000" textLength="18.2" lengthAdjust="spacingAndGlyphs" >-48</text>
<text x="187.1" y="618.0" font-size="11" font-weight="400" fill="#000" textLength="110.4" lengthAdjust="spacingAndGlyphs" >B0:E2:35:77:7B:91</text>
<text x="335.8" y="618.0" font-size="11" font-weight="400" fill="#000" textLength="14.2" lengthAdjust="spacingAndGlyphs" >no</text>
<text x="401.0" y="618.0" font-size="11" font-weight="400" fill="#000" textLength="88.8" lengthAdjust="spacingAndGlyphs" >192.168.88.250</text>
<text x="508.1" y="618.0" font-size="11" font-weight="400" fill="#000" textLength="51.6" lengthAdjust="spacingAndGlyphs" >02:40:35</text>
<text x="591.3" y="618.0" font-size="11" font-weight="400" fill="#000" textLength="18.2" lengthAdjust="spacingAndGlyphs" >-53</text>
<rect x="632" y="557" width="1" height="14" fill="#2eaadc" />
<rect x="634" y="558" width="3" height="13" fill="#2eaadc" />
<rect x="638" y="558" width="3" height="13" fill="#2eaadc" />
<rect x="642" y="558" width="3" height="13" fill="#2eaadc" />
<rect x="646" y="558" width="3" height="13" fill="#2eaadc" />
<rect x="650" y="557" width="3" height="14" fill="#2eaadc" />
<rect x="654" y="558" width="3" height="13" fill="#2eaadc" />
<rect x="658" y="557" width="3" height="14" fill="#2eaadc" />
<rect x="662" y="558" width="3" height="13" fill="#2eaadc" />
<rect x="666" y="558" width="3" height="13" fill="#2eaadc" />
<rect x="670" y="562" width="3" height="9" fill="#7cae5e" />
<rect x="674" y="556" width="3" height="15" fill="#2eaadc" />
<rect x="678" y="556" width="3" height="15" fill="#2eaadc" />
<rect x="682" y="556" width="3" height="15" fill="#2eaadc" />
<rect x="686" y="557" width="3" height="14" fill="#2eaadc" />
<rect x="690" y="557" width="3" height="14" fill="#2eaadc" />
<rect x="694" y="558" width="3" height="13" fill="#2eaadc" />
<rect x="698" y="558" width="3" height="13" fill="#2eaadc" />
<rect x="702" y="559" width="3" height="12" fill="#4cc8b8" />
<rect x="706" y="559" width="3" height="12" fill="#4cc8b8" />
<rect x="710" y="559" width="3" height="12" fill="#4cc8b8" />
<rect x="714" y="559" width="3" height="12" fill="#4cc8b8" />
<rect x="718" y="557" width="3" height="14" fill="#2eaadc" />
<rect x="722" y="558" width="3" height="13" fill="#2eaadc" />
<rect x="726" y="559" width="3" height="12" fill="#2eaadc" />
<rect x="730" y="559" width="3" height="12" fill="#2eaadc" />
<rect x="734" y="559" width="2" height="12" fill="#2eaadc" />
<rect x="632" y="581" width="1" height="15" fill="#2eaadc" />
<rect x="634" y="581" width="3" height="15" fill="#2eaadc" />
<rect x="638" y="581" width="3" height="15" fill="#2eaadc" />
<rect x="642" y="581" width="3" height="15" fill="#2eaadc" />
<rect x="646" y="581" width="3" height="15" fill="#2eaadc" />
<rect x="650" y="581" width="3" height="15" fill="#2eaadc" />
<rect x="654" y="581" width="3" height="15" fill="#2eaadc" />
<rect x="658" y="581" width="3" height="15" fill="#2eaadc" />
<rect x="662" y="583" width="3" height="13" fill="#2eaadc" />
<rect x="666" y="583" width="3" height="13" fill="#2eaadc" />
<rect x="670" y="582" width="3" height="14" fill="#2eaadc" />
<rect x="674" y="582" width="3" height="14" fill="#2eaadc" />
<rect x="678" y="582" width="3" height="14" fill="#2eaadc" />
<rect x="682" y="582" width="3" height="14" fill="#2eaadc" />
<rect x="686" y="583" width="3" height="13" fill="#2eaadc" />
<rect x="690" y="580" width="3" height="16" fill="#2eaadc" />
<rect x="694" y="580" width="3" height="16" fill="#2eaadc" />
<rect x="698" y="580" width="3" height="16" fill="#2eaadc" />
<rect x="702" y="580" width="3" height="16" fill="#2eaadc" />
<rect x="706" y="580" width="3" height="16" fill="#2eaadc" />
<rect x="710" y="580" width="3" height="16" fill="#2eaadc" />
<rect x="714" y="580" width="3" height="16" fill="#2eaadc" />
<rect x="718" y="580" width="3" height="16" fill="#2eaadc" />
<rect x="722" y="580" width="3" height="16" fill="#2eaadc" />
<rect x="726" y="580" width="3" height="16" fill="#2eaadc" />
<rect x="730" y="580" width="3" height="16" fill="#2eaadc" />
<rect x="734" y="580" width="2" height="16" fill="#2eaadc" />
<rect x="632" y="607" width="1" height="14" fill="#2eaadc" />
<rect x="634" y="607" width="3" height="14" fill="#2eaadc" />
<rect x="638" y="607" width="3" height="14" fill="#2eaadc" />
<rect x="642" y="607" width="3" height="14" fill="#2eaadc" />
<rect x="646" y="607" width="3" height="14" fill="#2eaadc" />
<rect x="650" y="607" width="3" height="14" fill="#2eaadc" />
<rect x="654" y="607" width="3" height="14" fill="#2eaadc" />
<rect x="658" y="606" width="3" height="15" fill="#2eaadc" />
<rect x="662" y="607" width="3" height="14" fill="#2eaadc" />
<rect x="666" y="606" width="3" height="15" fill="#2eaadc" />
<rect x="670" y="606" width="3" height="15" fill="#2eaadc" />
<rect x="674" y="606" width="3" height="15" fill="#2eaadc" />
<rect x="678" y="606" width="3" height="15" fill="#2eaadc" />
<rect x="682" y="606" width="3" height="15" fill="#2eaadc" />
<rect x="686" y="606" width="3" height="15" fill="#2eaadc" />
<rect x="690" y="606" width="3" height="15" fill="#2eaadc" />
<rect x="694" y="606" width="3" height="15" fill="#2eaadc" />
<rect x="698" y="607" width="3" height="14" fill="#2eaadc" />
<rect x="702" y="607" width="3" height="14" fill="#2eaadc" />
<rect x="706" y="607" width="3" height="14" fill="#2eaadc" />
<rect x="710" y="606" width="3" height="15" fill="#2eaadc" />
<rect x="714" y="606" width="3" height="15" fill="#2eaadc" />
<rect x="718" y="606" width="3" height="15" fill="#2eaadc" />
<rect x="722" y="606" width="3" height="15" fill="#2eaadc" />
<rect x="726" y="606" width="3" height="15" fill="#2eaadc" />
<rect x="730" y="606" width="3" height="15" fill="#2eaadc" />
<rect x="734" y="606" width="2" height="15" fill="#2eaadc" />
<rect x="145" y="731" width="598" height="1" fill="#d9d9d9" />
<rect x="147" y="738" width="594" height="28" fill="#808080" />
<rect x="148" y="739" width="592" height="27" fill="#ffffff" />
<rect x="148" y="757" width="592" height="1" fill="#808080" />
<rect x="260" y="739" width="1" height="27" fill="#808080" />
<rect x="380" y="739" width="1" height="27" fill="#808080" />
<rect x="500" y="739" width="1" height="27" fill="#808080" />
<rect x="620" y="739" width="1" height="27" fill="#808080" />
<rect x="765" y="87" width="576" height="1" fill="#d9d9d9" />
<text x="1271.7" y="117.0" font-size="16" font-weight="400" fill="#000" textLength="65.7" lengthAdjust="spacingAndGlyphs" >Internet</text>
<rect x="765" y="123" width="576" height="1" fill="#b8b8b8" />
<rect x="765" y="124" width="576" height="1" fill="#fbfbfb" />
<rect x="765" y="125" width="576" height="1" fill="#d8d8d8" />
<text x="813.0" y="148.0" font-size="11" font-weight="700" fill="#000" textLength="129.5" lengthAdjust="spacingAndGlyphs" >Address Acquisition</text>
<circle cx="997.5" cy="142.5" r="6" fill="#fff" stroke="#3c3c3c" stroke-width="1.05"/>
<text x="1005.9" y="149.0" font-size="13" font-weight="400" fill="#000" textLength="39.7" lengthAdjust="spacingAndGlyphs" >Static</text>
<circle cx="1067.5" cy="142.5" r="6" fill="#fff" stroke="#3c3c3c" stroke-width="1.05"/>
<circle cx="1067.5" cy="142.5" r="3.2" fill="#333"/>
<text x="1075.9" y="149.0" font-size="13" font-weight="400" fill="#000" textLength="66.9" lengthAdjust="spacingAndGlyphs" >Automatic</text>
<circle cx="1164.5" cy="142.5" r="6" fill="#fff" stroke="#3c3c3c" stroke-width="1.05"/>
<text x="1172.5" y="149.0" font-size="13" font-weight="400" fill="#000" textLength="41.0" lengthAdjust="spacingAndGlyphs" >PPPoE</text>
<rect x="765" y="160" width="576" height="1" fill="#b8b8b8" />
<rect x="765" y="161" width="576" height="1" fill="#fbfbfb" />
<rect x="765" y="162" width="576" height="1" fill="#d8d8d8" />
<text x="870.9" y="186.0" font-size="11" font-weight="700" fill="#000" textLength="71.6" lengthAdjust="spacingAndGlyphs" >IP Address</text>
<text x="991.5" y="186.0" font-size="11" font-weight="400" fill="#000" textLength="81.0" lengthAdjust="spacingAndGlyphs" >178.48.51.231</text>
<rect x="1221.5" y="170.5" width="55" height="26" rx="3" fill="#d8d8d8"/>
<rect x="1220.5" y="169.5" width="55" height="26" rx="3" fill="url(#btng)" stroke="#7c7c7c"/>
<text x="1229.1" y="187.0" font-size="11" font-weight="400" fill="#000" textLength="38.2" lengthAdjust="spacingAndGlyphs" >Renew</text>
<rect x="1281.5" y="170.5" width="56" height="26" rx="3" fill="#d8d8d8"/>
<rect x="1280.5" y="169.5" width="56" height="26" rx="3" fill="url(#btng)" stroke="#7c7c7c"/>
<text x="1286.1" y="187.0" font-size="11" font-weight="400" fill="#000" textLength="45.2" lengthAdjust="spacingAndGlyphs" >Release</text>
<rect x="765" y="200" width="576" height="1" fill="#d9d9d9" />
<text x="885.1" y="223.0" font-size="11" font-weight="700" fill="#000" textLength="57.4" lengthAdjust="spacingAndGlyphs" >Netmask</text>
<text x="991.2" y="223.0" font-size="11" font-weight="400" fill="#000" textLength="114.7" lengthAdjust="spacingAndGlyphs" >255.255.254.0 (/23)</text>
<rect x="765" y="235" width="576" height="1" fill="#d9d9d9" />
<text x="886.0" y="258.0" font-size="11" font-weight="700" fill="#000" textLength="56.5" lengthAdjust="spacingAndGlyphs" >Gateway</text>
<text x="991.5" y="258.0" font-size="11" font-weight="400" fill="#000" textLength="81.3" lengthAdjust="spacingAndGlyphs" >178.48.51.254</text>
<rect x="765" y="270" width="576" height="1" fill="#b8b8b8" />
<rect x="765" y="271" width="576" height="1" fill="#fbfbfb" />
<rect x="765" y="272" width="576" height="1" fill="#d8d8d8" />
<text x="858.1" y="295.0" font-size="11" font-weight="700" fill="#000" textLength="84.4" lengthAdjust="spacingAndGlyphs" >MAC Address</text>
<rect x="992" y="302" width="147" height="1" fill="rgba(0,0,0,0.16)" />
<rect x="1138" y="280" width="1" height="22" fill="rgba(0,0,0,0.16)" />
<rect x="993" y="303" width="147" height="1" fill="rgba(0,0,0,0.06)" />
<rect x="1139" y="281" width="1" height="23" fill="rgba(0,0,0,0.06)" />
<rect x="991" y="279" width="147" height="23" fill="#7a7a7a" />
<rect x="992" y="280" width="145" height="21" fill="#ffffff" />
<text x="994.2" y="296.0" font-size="12" font-weight="400" fill="#000" textLength="109.9" lengthAdjust="spacingAndGlyphs" >6C:3B:6B:5E:6F:20</text>
<rect x="765" y="307" width="576" height="1" fill="#d9d9d9" />
<text x="842.9" y="330.0" font-size="11" font-weight="700" fill="#000" textLength="99.6" lengthAdjust="spacingAndGlyphs" >Firewall Router</text>
<rect x="991" y="320" width="13" height="13" fill="#333" />
<rect x="992" y="321" width="11" height="11" fill="#fff" />
<path d="M993.3 326.3 L996 329 L1001.6 323.3" stroke="#3a3a3a" stroke-width="1.4" fill="none"/>
<rect x="765" y="342" width="576" height="1" fill="#d9d9d9" />
<text x="1223.5" y="372.0" font-size="16" font-weight="400" fill="#000" textLength="113.9" lengthAdjust="spacingAndGlyphs" >Local Network</text>
<rect x="765" y="378" width="576" height="1" fill="#b8b8b8" />
<rect x="765" y="379" width="576" height="1" fill="#fbfbfb" />
<rect x="765" y="380" width="576" height="1" fill="#d8d8d8" />
<text x="870.8" y="403.5" font-size="11" font-weight="700" fill="#000" textLength="71.7" lengthAdjust="spacingAndGlyphs" >IP Address</text>
<rect x="992" y="410" width="147" height="1" fill="rgba(0,0,0,0.16)" />
<rect x="1138" y="388" width="1" height="22" fill="rgba(0,0,0,0.16)" />
<rect x="993" y="411" width="147" height="1" fill="rgba(0,0,0,0.06)" />
<rect x="1139" y="389" width="1" height="23" fill="rgba(0,0,0,0.06)" />
<rect x="991" y="387" width="147" height="23" fill="#7a7a7a" />
<rect x="992" y="388" width="145" height="21" fill="#ffffff" />
<text x="994.5" y="404.0" font-size="12" font-weight="400" fill="#000" textLength="73.9" lengthAdjust="spacingAndGlyphs" >192.168.88.1</text>
<rect x="765" y="415" width="576" height="1" fill="#d9d9d9" />
<text x="885.1" y="438.0" font-size="11" font-weight="700" fill="#000" textLength="57.4" lengthAdjust="spacingAndGlyphs" >Netmask</text>
<rect x="992" y="446" width="158" height="1" fill="rgba(0,0,0,0.16)" />
<rect x="1149" y="422" width="1" height="24" fill="rgba(0,0,0,0.16)" />
<rect x="993" y="447" width="158" height="1" fill="rgba(0,0,0,0.06)" />
<rect x="1150" y="423" width="1" height="25" fill="rgba(0,0,0,0.06)" />
<rect x="991" y="421" width="158" height="25" fill="#7a7a7a" />
<rect x="992" y="422" width="156" height="23" fill="#ffffff" />
<rect x="1131" y="422" width="17" height="23" fill="#dcdcdc" />
<rect x="1131" y="422" width="1" height="23" fill="#a8a8a8" />
<path d="M1135.5 431 L1139.5 435 L1143.5 431" stroke="#4a4a4a" stroke-width="1.1" fill="none"/>
<text x="996.9" y="439.0" font-size="12" font-weight="400" fill="#000" textLength="115.2" lengthAdjust="spacingAndGlyphs" >255.255.255.0 (/24)</text>
<rect x="765" y="450" width="576" height="1" fill="#d9d9d9" />
<text x="860.0" y="473.0" font-size="11" font-weight="700" fill="#000" textLength="82.5" lengthAdjust="spacingAndGlyphs" >DHCP Server</text>
<rect x="991" y="463" width="13" height="13" fill="#333" />
<rect x="992" y="464" width="11" height="11" fill="#fff" />
<path d="M993.3 469.3 L996 472 L1001.6 466.3" stroke="#3a3a3a" stroke-width="1.4" fill="none"/>
<rect x="765" y="485" width="576" height="1" fill="#d9d9d9" />
<text x="816.2" y="508.0" font-size="11" font-weight="700" fill="#000" textLength="126.3" lengthAdjust="spacingAndGlyphs" >DHCP Server Range</text>
<path d="M963 508 L968.0 502 L973 508z" fill="#000"/>
<rect x="992" y="515" width="147" height="1" fill="rgba(0,0,0,0.16)" />
<rect x="1138" y="493" width="1" height="22" fill="rgba(0,0,0,0.16)" />
<rect x="993" y="516" width="147" height="1" fill="rgba(0,0,0,0.06)" />
<rect x="1139" y="494" width="1" height="23" fill="rgba(0,0,0,0.06)" />
<rect x="991" y="492" width="147" height="23" fill="#7a7a7a" />
<rect x="992" y="493" width="145" height="21" fill="#ffffff" />
<clipPath id="clip1"><rect x="992" y="493" width="143" height="21"/></clipPath>
<g clip-path="url(#clip1)">
<text x="994.5" y="509.0" font-size="12" font-weight="400" fill="#000" textLength="173.0" lengthAdjust="spacingAndGlyphs" >192.168.88.10-192.168.88.254</text>
</g>
<rect x="765" y="520" width="576" height="1" fill="#d9d9d9" />
<text x="916.2" y="543.0" font-size="11" font-weight="700" fill="#000" textLength="26.3" lengthAdjust="spacingAndGlyphs" >NAT</text>
<rect x="991" y="533" width="13" height="13" fill="#333" />
<rect x="992" y="534" width="11" height="11" fill="#fff" />
<path d="M993.3 539.3 L996 542 L1001.6 536.3" stroke="#3a3a3a" stroke-width="1.4" fill="none"/>
<rect x="765" y="555" width="576" height="1" fill="#d9d9d9" />
<text x="908.9" y="578.0" font-size="11" font-weight="700" fill="#000" textLength="33.6" lengthAdjust="spacingAndGlyphs" >UPnP</text>
<rect x="991" y="568" width="13" height="13" fill="#333" />
<rect x="992" y="569" width="11" height="11" fill="#fff" />
<rect x="765" y="590" width="576" height="1" fill="#d9d9d9" />
<text x="1304.2" y="620.0" font-size="16" font-weight="400" fill="#000" textLength="32.3" lengthAdjust="spacingAndGlyphs" >VPN</text>
<rect x="765" y="626" width="576" height="1" fill="#b8b8b8" />
<rect x="765" y="627" width="576" height="1" fill="#fbfbfb" />
<rect x="765" y="628" width="576" height="1" fill="#d8d8d8" />
<text x="867.7" y="651.0" font-size="11" font-weight="700" fill="#000" textLength="74.8" lengthAdjust="spacingAndGlyphs" >VPN Access</text>
<rect x="991" y="641" width="13" height="13" fill="#333" />
<rect x="992" y="642" width="11" height="11" fill="#fff" />
<path d="M993.3 647.3 L996 650 L1001.6 644.3" stroke="#3a3a3a" stroke-width="1.4" fill="none"/>
<rect x="765" y="663" width="576" height="1" fill="#d9d9d9" />
<text x="860.2" y="686.0" font-size="11" font-weight="700" fill="#000" textLength="82.3" lengthAdjust="spacingAndGlyphs" >VPN Address</text>
<text x="990.8" y="686.0" font-size="11" font-weight="400" fill="#000" textLength="195.7" lengthAdjust="spacingAndGlyphs" >642e064be463.sn.mynetname.net</text>
<rect x="765" y="698" width="576" height="1" fill="#d9d9d9" />
<text x="882.9" y="721.0" font-size="11" font-weight="700" fill="#000" textLength="59.6" lengthAdjust="spacingAndGlyphs" >VPN User</text>
<text x="991.5" y="721.0" font-size="11" font-weight="400" fill="#000" textLength="20.9" lengthAdjust="spacingAndGlyphs" >vpn</text>
<rect x="765" y="733" width="576" height="1" fill="#d9d9d9" />
<text x="850.9" y="756.0" font-size="11" font-weight="700" fill="#000" textLength="91.6" lengthAdjust="spacingAndGlyphs" >VPN Password</text>
<rect x="992" y="764" width="147" height="1" fill="rgba(0,0,0,0.16)" />
<rect x="1138" y="741" width="1" height="23" fill="rgba(0,0,0,0.16)" />
<rect x="993" y="765" width="147" height="1" fill="rgba(0,0,0,0.06)" />
<rect x="1139" y="742" width="1" height="24" fill="rgba(0,0,0,0.06)" />
<rect x="991" y="740" width="147" height="24" fill="#7a7a7a" />
<rect x="992" y="741" width="145" height="22" fill="#ffffff" />
<circle cx="998" cy="752.5" r="3" fill="#000"/>
<circle cx="1006" cy="752.5" r="3" fill="#000"/>
<circle cx="1014" cy="752.5" r="3" fill="#000"/>
<circle cx="1022" cy="752.5" r="3" fill="#000"/>
<circle cx="1030" cy="752.5" r="3" fill="#000"/>
<circle cx="1038" cy="752.5" r="3" fill="#000"/>
<circle cx="1046" cy="752.5" r="3" fill="#000"/>
<circle cx="1054" cy="752.5" r="3" fill="#000"/>
<circle cx="1062" cy="752.5" r="3" fill="#000"/>
<circle cx="1070" cy="752.5" r="3" fill="#000"/>
<circle cx="1078" cy="752.5" r="3" fill="#000"/>
<circle cx="1086" cy="752.5" r="3" fill="#000"/>
<circle cx="1094" cy="752.5" r="3" fill="#000"/>
<rect x="1146" y="747" width="13" height="13" fill="#333" />
<rect x="1147" y="748" width="11" height="11" fill="#fff" />
<path d="M1148.3 753.3 L1151 756 L1156.6 750.3" stroke="#3a3a3a" stroke-width="1.4" fill="none"/>
<text x="1161.1" y="756.5" font-size="11" font-weight="400" fill="#000" textLength="25.2" lengthAdjust="spacingAndGlyphs" >Hide</text>
<rect x="0" y="766" width="1366" height="2" fill="#232323" />
<rect x="245" y="766" width="48" height="2" fill="#5c5c5c" />
</svg>
</body></html>
